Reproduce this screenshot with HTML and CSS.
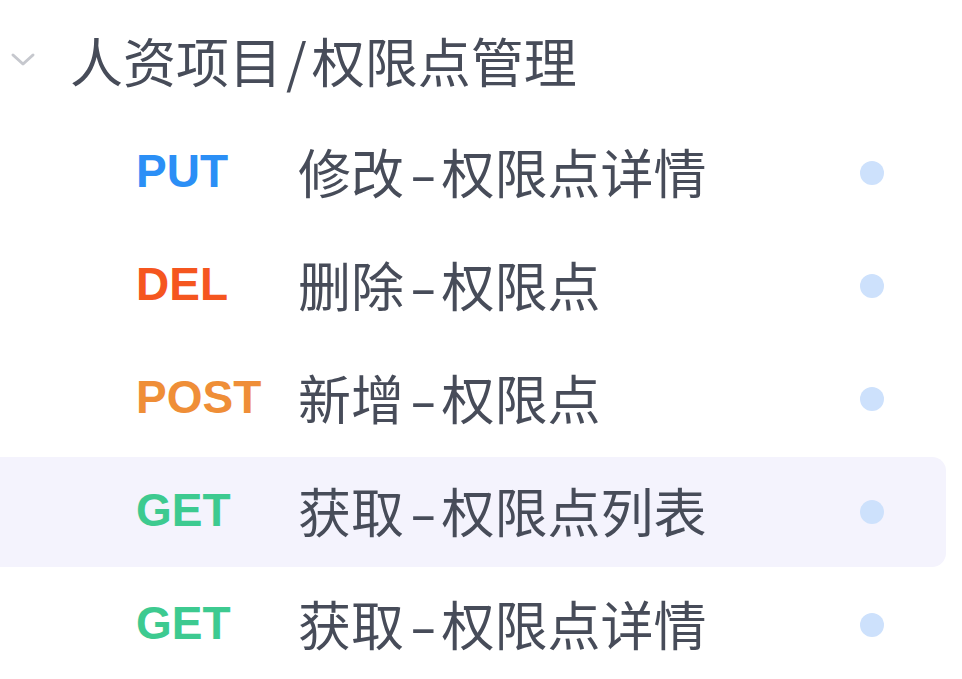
FILE: index.html
```html
<!DOCTYPE html>
<html lang="zh-CN">
<head>
<meta charset="utf-8">
<link rel="stylesheet" href="styles.css">
</head>
<body>
<div class="tree">
  <div class="folder">
    <svg class="chev" width="26" height="16" viewBox="0 0 26 16"><path d="M3 3 L13 12 L23 3" fill="none" stroke="#c6c8ce" stroke-width="3" stroke-linecap="round" stroke-linejoin="round"/></svg>
    <span class="folder-name">人资项目<span class="slash">/</span>权限点管理</span>
  </div>
  <div class="rows">
    <div class="row"><span class="method put">PUT</span><span class="title">修改<span class="sep">-</span>权限点详情</span><span class="dot"></span></div>
    <div class="row"><span class="method del">DEL</span><span class="title">删除<span class="sep">-</span>权限点</span><span class="dot"></span></div>
    <div class="row"><span class="method post">POST</span><span class="title">新增<span class="sep">-</span>权限点</span><span class="dot"></span></div>
    <div class="row active"><span class="method get">GET</span><span class="title">获取<span class="sep">-</span>权限点列表</span><span class="dot"></span></div>
    <div class="row"><span class="method get">GET</span><span class="title">获取<span class="sep">-</span>权限点详情</span><span class="dot"></span></div>
  </div>
</div>
</body>
</html>
```
FILE: styles.css
```css
html, body {
  margin: 0;
  padding: 0;
  background: #ffffff;
}
body {
  font-family: "Noto Sans CJK SC", "Noto Sans", sans-serif;
  color: #474c59;
}
.tree {
  width: 946px;
  padding-top: 5px;
}
.folder {
  height: 110px;
  display: flex;
  align-items: center;
  margin-bottom: 3px;
}
.chev {
  margin-left: 10px;
  margin-right: 34px;
  flex: none;
}
.folder-name {
  font-size: 53px;
  line-height: 1;
  white-space: nowrap;
}
.slash {
  margin: 0 5px 0 4px;
}
.rows {
  display: flex;
  flex-direction: column;
  gap: 3px;
}
.row {
  height: 110px;
  display: flex;
  align-items: center;
  border-radius: 0 14px 14px 0;
}
.row.active {
  background: #f4f3fd;
}
.method {
  font-family: "Liberation Sans", Arial, sans-serif;
  font-weight: 700;
  font-size: 46px;
  width: 162px;
  margin-left: 136px;
  flex: none;
  line-height: 1;
  position: relative;
  top: -2px;
}
.put { color: #2b8ff6; }
.del { color: #f5561f; }
.post { color: #ef8e37; }
.get { color: #3dca90; }
.title {
  font-size: 53px;
  line-height: 1;
  flex: 1;
  white-space: nowrap;
  position: relative;
  top: -2px;
}
.sep {
  display: inline-block;
  transform: scaleX(1.5);
  margin: 0 9px 0 10px;
}
.dot {
  width: 24px;
  height: 24px;
  border-radius: 50%;
  background: #cde1fc;
  margin-right: 62px;
  flex: none;
}
```
